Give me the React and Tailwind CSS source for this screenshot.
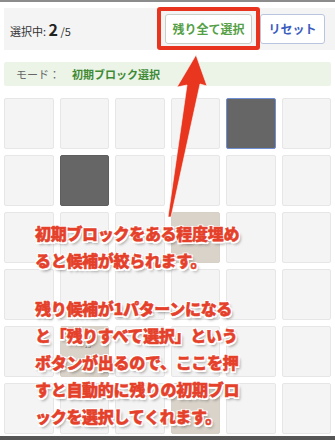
import React from 'react';

const dark = new Set(['0-4', '1-1']);
const beige = new Set(['2-3', '4-1', '5-3']);

function Cell({ r, c }) {
  const key = `${r}-${c}`;
  if (dark.has(key)) {
    const selected = key === '0-4';
    return (
      <div
        className={
          selected
            ? 'h-[51px] rounded-[2px] border border-[#6f8fd2] bg-[#666666]'
            : 'h-[51px] rounded-[2px] border border-[#5e5e5e] bg-[#666666]'
        }
      />
    );
  }
  if (beige.has(key)) {
    return (
      <div className="relative h-[51px] rounded-[2px] border border-[#d6d0c6] bg-[#d9d3ca]">
        {key === '4-1' ? (
          <span className="absolute left-[24px] top-[16px] text-[6px] leading-none text-[#777]">15</span>
        ) : null}
      </div>
    );
  }
  return <div className="h-[51px] rounded-[2px] border border-[#e6e6e6] bg-[#f4f4f4]" />;
}

export default function App() {
  const rows = [0, 1, 2, 3, 4, 5];
  const cols = [0, 1, 2, 3, 4, 5];

  return (
    <div className="relative h-[440px] w-[335px] overflow-hidden bg-white font-['Noto_Sans_CJK_JP',sans-serif]">
      <div className="h-[2px] bg-[#8c8c8c]" />

      {/* header */}
      <div className="ml-[4px] mt-[6px] flex h-[42px] items-center justify-between bg-[#f4f4f4] pl-[6px] pr-[10px]">
        <p className="text-[11px] text-[#333]">
          選択中: <span className="text-[16px] font-bold text-[#222]">2</span> /5
        </p>
        <div className="flex items-center gap-[8px]">
          <button className="h-[30px] w-[87px] rounded-[3px] border border-[#c9cfc6] bg-white text-[12px] font-bold text-[#55a046]">
            残り全て選択
          </button>
          <button className="h-[30px] w-[65px] rounded-[3px] border border-[#b9c5df] bg-white text-[12px] font-bold text-[#3b5cbf]">
            リセット
          </button>
        </div>
      </div>

      {/* mode */}
      <div className="ml-[4px] mr-[4px] mt-[12px] flex h-[24px] items-center gap-[12px] rounded-[2px] bg-[#ebf4e7] pl-[12px] text-[11px]">
        <span className="text-[#666]">モード：</span>
        <span className="font-bold text-[#3f8a35]">初期ブロック選択</span>
      </div>

      {/* grid */}
      <div className="mt-[12px] grid grid-cols-6 gap-[6px] px-[4px]">
        {rows.map((r) => cols.map((c) => <Cell key={`${r}-${c}`} r={r} c={c} />))}
      </div>

      <div className="absolute bottom-0 left-0 h-[4px] w-full bg-[#555]" />

      {/* annotation: red frame */}
      <div className="absolute left-[157px] top-[7px] h-[43px] w-[103px] rounded-[3px] border-[4px] border-[#e8331f]" />

      {/* annotation: arrow */}
      <svg className="absolute left-0 top-0" width="335" height="440" viewBox="0 0 335 440">
        <polygon
          points="196,55 207,86 200,84 171,217 168,217 187,85 177,87"
          fill="#e8361f"
          stroke="#ffffff"
          strokeWidth="0.6"
        />
      </svg>

      {/* annotation: text */}
      <div className="absolute left-[35px] top-[220px] text-[16px] font-black leading-[27px] tracking-[-0.3px] text-[#e4402a] [-webkit-text-stroke:0.5px_#e4402a] [text-shadow:1.5px_1.5px_0_#fff,-1.5px_-1.5px_0_#fff,1.5px_-1.5px_0_#fff,-1.5px_1.5px_0_#fff,0_1.5px_0_#fff,0_-1.5px_0_#fff,2px_3px_3px_rgba(0,0,0,0.4)]">
        <p>初期ブロックをある程度埋め</p>
        <p>ると候補が絞られます。</p>
        <p className="mt-[21px]">残り候補が1パターンになる</p>
        <p>と「残りすべて選択」という</p>
        <p>ボタンが出るので、ここを押</p>
        <p>すと自動的に残りの初期ブロ</p>
        <p>ックを選択してくれます。</p>
      </div>
    </div>
  );
}
